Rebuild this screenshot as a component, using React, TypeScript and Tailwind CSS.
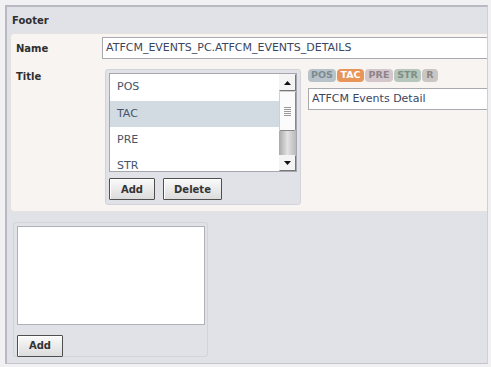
import React from 'react'

const font = { fontFamily: '"DejaVu Sans", Verdana, sans-serif' }

function Btn({ label, w }: { label: string; w: string }) {
  return (
    <button
      className={`${w} shrink-0 h-[22px] border border-[#4f4f4f] rounded-[1px] bg-gradient-to-b from-[#fafafa] to-[#dcdcdc] text-[10px] font-bold text-[#333] shadow-[inset_1px_1px_0_#fff]`}
    >
      {label}
    </button>
  )
}

const tags = [
  { t: 'POS', w: 'w-[28px]', c: 'bg-[#b7c3c9] text-[#7e8b92]' },
  { t: 'TAC', w: 'w-[27px]', c: 'bg-[#e8955a] text-white' },
  { t: 'PRE', w: 'w-[28px]', c: 'bg-[#d3c7cc] text-[#8d8388]' },
  { t: 'STR', w: 'w-[27px]', c: 'bg-[#b8c7bd] text-[#7f8e85]' },
  { t: 'R', w: 'w-[16px]', c: 'bg-[#c9c6c3] text-[#8a8785]' },
]

const items = ['POS', 'TAC', 'PRE', 'STR']

export default function App() {
  return (
    <div className="w-[491px] h-[367px] bg-[#f1f1f3] pt-[5px] pl-[5px] overflow-hidden" style={font}>
      <div className="w-[483px] h-[359px] bg-[#e1e1e8] border-t-2 border-l-2 border-[#b9b9c1] border-r border-b border-r-[#cfcfd4] border-b-[#c4c4ca] overflow-hidden">
        {/* header */}
        <div className="h-[26px] pl-[5px] flex items-center text-[10px] font-bold text-[#2f2f2f]">Footer</div>

        {/* cream panel */}
        <div className="ml-[3px] h-[179px] bg-[#f7f4f1] border-t border-l border-b border-[#e6e2de] rounded-tl-[4px] rounded-bl-[4px] overflow-hidden pt-[3px]">
          <div className="flex items-center">
            <div className="w-[91px] shrink-0 pl-[5px] text-[10px] font-bold text-[#2f2f2f]">Name</div>
            <div className="w-[420px] shrink-0 h-[22px] bg-white border border-[#a9a9b0] flex items-center pl-[3px] text-[11px] text-[#3b4660] whitespace-nowrap">
              ATFCM_EVENTS_PC.ATFCM_EVENTS_DETAILS
            </div>
          </div>

          <div className="flex mt-[10px]">
            <div className="w-[94px] shrink-0 pl-[5px] text-[10px] font-bold text-[#2f2f2f]">Title</div>

            {/* list wrapper */}
            <div className="w-[196px] shrink-0 h-[136px] bg-[#e1e1e8] border border-[#d3d3da] rounded-[3px] pt-[3px] pl-[3px]">
              <div className="w-[188px] h-[99px] bg-white border border-[#a6a6ae] flex overflow-hidden">
                <div className="flex-1">
                  {items.map((it, i) => (
                    <div
                      key={it}
                      className={`pl-[7px] flex items-center text-[11px] text-[#45546a] ${i === 1 ? 'bg-[#d3dbe2]' : ''} ${i === 0 ? 'h-[27px]' : 'h-[26px]'}`}
                    >
                      {it}
                    </div>
                  ))}
                </div>
                {/* scrollbar */}
                <div className="w-[17px] shrink-0 flex flex-col bg-[#e6e6e6]">
                  <div className="h-[17px] shrink-0 bg-[#f4f4f4] border border-[#f4f4f4] border-r-[#777] border-b-[#777] flex items-center justify-center">
                    <svg width="7" height="4" viewBox="0 0 7 4"><path d="M3.5 0 L7 4 L0 4 Z" fill="#111" /></svg>
                  </div>
                  <div className="h-[40px] shrink-0 bg-[#fbfbfb] border border-[#cfcfcf] border-r-[#888] border-b-[#888] rounded-[2px] flex flex-col items-center justify-center gap-[1px]">
                    <div className="w-[7px] h-px bg-[#999]" />
                    <div className="w-[7px] h-px bg-[#999]" />
                    <div className="w-[7px] h-px bg-[#999]" />
                    <div className="w-[7px] h-px bg-[#999]" />
                    <div className="w-[7px] h-px bg-[#999]" />
                  </div>
                  <div className="flex-1 bg-gradient-to-r from-[#a9a9a9] via-[#e2e2e2] to-[#b9b9b9]" />
                  <div className="h-[16px] shrink-0 bg-[#f4f4f4] border border-[#f4f4f4] border-r-[#777] border-b-[#777] flex items-center justify-center">
                    <svg width="7" height="4" viewBox="0 0 7 4"><path d="M0 0 L7 0 L3.5 4 Z" fill="#111" /></svg>
                  </div>
                </div>
              </div>
              <div className="flex gap-[8px] mt-[6px]">
                <Btn label="Add" w="w-[46px]" />
                <Btn label="Delete" w="w-[59px]" />
              </div>
            </div>

            {/* tags + title input */}
            <div className="ml-[7px] shrink-0 flex flex-col">
              <div className="flex gap-px">
                {tags.map((t) => (
                  <div
                    key={t.t}
                    className={`${t.w} ${t.c} h-[13px] rounded-[4px] flex items-center justify-center text-[9.5px] font-bold`}
                  >
                    {t.t}
                  </div>
                ))}
              </div>
              <div className="mt-[6px] w-[200px] h-[22px] bg-white border border-[#a9a9b0] flex items-center pl-[3px] text-[11px] text-[#3b4660] whitespace-nowrap">
                ATFCM Events Detail
              </div>
            </div>
          </div>
        </div>

        {/* bottom box */}
        <div className="ml-[6px] mt-[10px] w-[195px] h-[135px] bg-[#e1e1e8] border border-[#d3d3da] rounded-[3px] pt-[3px] pl-[3px]">
          <div className="w-[188px] h-[99px] bg-white border border-[#b0b0b8]" />
          <div className="mt-[7px]">
            <Btn label="Add" w="w-[46px]" />
          </div>
        </div>
      </div>
    </div>
  )
}
